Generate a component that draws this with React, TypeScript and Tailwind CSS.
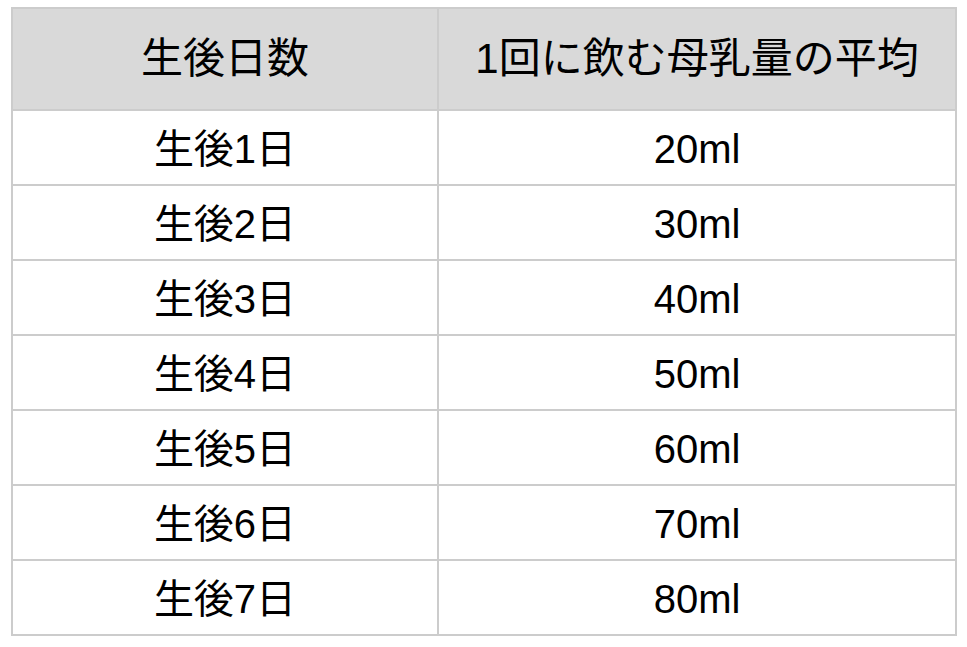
const rows = [
  { day: '生後1日', amount: '20ml' },
  { day: '生後2日', amount: '30ml' },
  { day: '生後3日', amount: '40ml' },
  { day: '生後4日', amount: '50ml' },
  { day: '生後5日', amount: '60ml' },
  { day: '生後6日', amount: '70ml' },
  { day: '生後7日', amount: '80ml' },
];

export default function App() {
  return (
    <div
      className="w-[967px] h-[647px] bg-white pt-[7px] pl-[11px] text-black"
      style={{ fontFamily: '"Liberation Sans", "Noto Sans CJK JP", sans-serif' }}
    >
      <div className="w-[946px] grid grid-cols-[426px_518px] border-l-2 border-t-2 border-[#cccccc]">
        {/* Header */}
        <div className="h-[102px] bg-[#d9d9d9] border-r-2 border-b-2 border-[#cccccc] flex items-center justify-center text-[42px] leading-none">
          生後日数
        </div>
        <div className="h-[102px] bg-[#d9d9d9] border-r-2 border-b-2 border-[#cccccc] flex items-center justify-center text-[42px] leading-none">
          1回に飲む母乳量の平均
        </div>

        {rows.map((r) => (
          <div key={r.day} className="contents">
            <div className="h-[75px] pt-[3px] border-r-2 border-b-2 border-[#cccccc] flex items-center justify-center text-[40px] leading-none">
              {r.day}
            </div>
            <div className="h-[75px] pt-[3px] border-r-2 border-b-2 border-[#cccccc] flex items-center justify-center text-[40px] leading-none">
              {r.amount}
            </div>
          </div>
        ))}
      </div>
    </div>
  );
}
